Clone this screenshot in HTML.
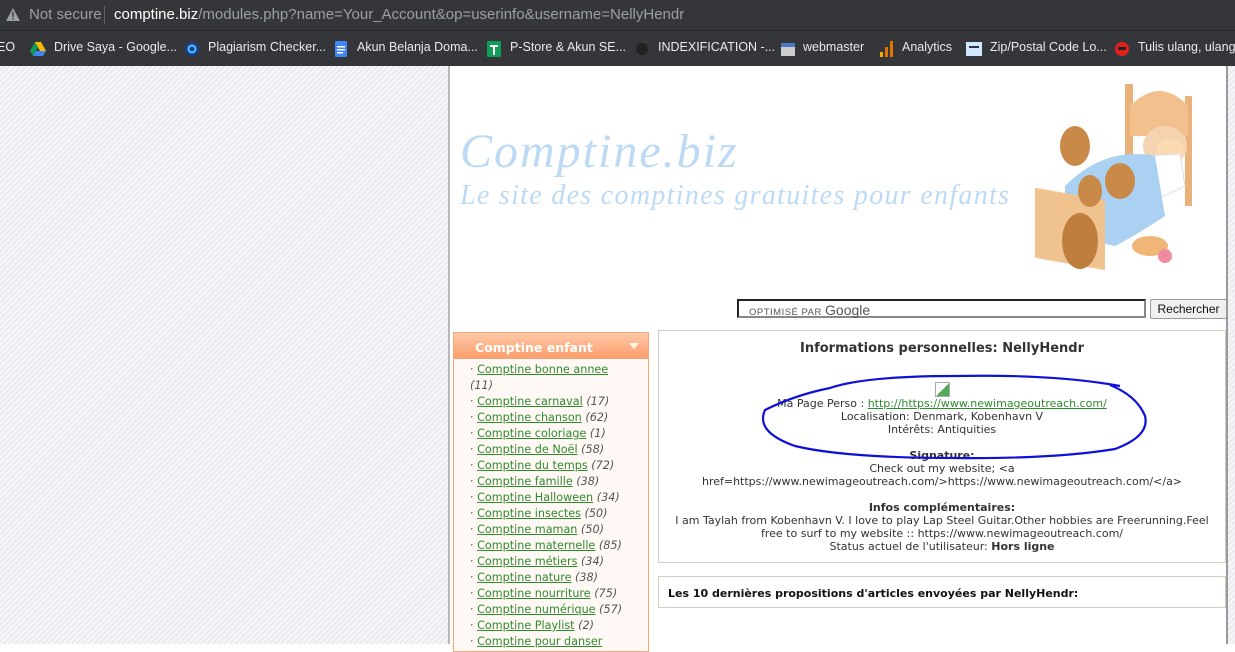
<!DOCTYPE html>
<html><head><meta charset="utf-8"><style>
*{margin:0;padding:0;box-sizing:border-box}
body{width:1235px;height:644px;overflow:hidden;font-family:"Liberation Sans",sans-serif;position:relative;background:#fff}
.addr{position:absolute;left:0;top:0;width:1235px;height:30px;background:#35363a;color:#9aa0a6;font-size:15px}
.bm{position:absolute;left:0;top:30px;width:1235px;height:36px;background:#35363a;color:#e8eaed;font-size:12.5px;border-top:1px solid #2a2a2c}
.bm span{position:absolute;top:9px;white-space:nowrap}
.ic{position:absolute;top:10px;width:16px;height:16px}
.stripes{position:absolute;top:66px;height:578px;background:repeating-linear-gradient(135deg,#f6f7f9 0 2px,#e9ebef 2px 4px)}
.page{position:absolute;left:448px;top:66px;width:780px;height:578px;background:#fff;border-left:2px solid #b8b8b8;border-right:2px solid #9a9a9a}
a{color:#2e8b2e}
.side{position:absolute;left:453px;top:332px;width:196px;height:320px;border:1px solid #f5a57a;background:#fff8f4}
.sh{height:26px;background:linear-gradient(#ffc9a8,#fb9f6c);color:#fff;font-weight:bold;font-size:12.5px;padding:7px 0 0 21px;border-bottom:1px solid #f5a57a;position:relative;font-family:"DejaVu Sans",sans-serif}
.side ul{list-style:none;font-family:"DejaVu Sans",sans-serif;font-size:11.2px;color:#555;padding:3px 0 0 16px;line-height:16px}
.side li i{color:#555}
.box{position:absolute;border:1px solid #cfcfbf;background:#fff;font-family:"DejaVu Sans",sans-serif;color:#333;font-size:11px;text-align:center}
</style></head><body>
<div class="addr">
<svg style="position:absolute;left:6px;top:8px" width="14" height="13"><path d="M7 0L14 13H0Z" fill="#9aa0a6"/><rect x="6.3" y="4" width="1.4" height="5" fill="#35363a"/><rect x="6.3" y="10" width="1.4" height="1.4" fill="#35363a"/></svg>
<span style="position:absolute;left:29px;top:6px">Not secure</span>
<span style="position:absolute;left:104px;top:6px;width:1px;height:18px;background:#5f6368"></span>
<span style="position:absolute;left:114px;top:6px;white-space:nowrap"><b style="color:#fff;font-weight:normal">comptine.biz</b>/modules.php?name=Your_Account&amp;op=userinfo&amp;username=NellyHendr</span>
</div>
<div class="bm">
<span style="left:-3px">EO</span>
<svg class="ic" style="left:30px" viewBox="0 0 16 16"><path d="M5 1h6l5 9h-6z" fill="#fbbc04"/><path d="M5 1L0 10l3 5 5-9z" fill="#0f9d58"/><path d="M3 15h10l3-5H6z" fill="#4285f4"/></svg><span style="left:54px">Drive Saya - Google...</span>
<svg class="ic" style="left:184px" viewBox="0 0 16 16"><circle cx="8" cy="8" r="7" fill="#1a3e8c"/><circle cx="8" cy="8" r="3.5" fill="none" stroke="#4cc3ff" stroke-width="2"/></svg><span style="left:208px">Plagiarism Checker...</span>
<svg class="ic" style="left:333px" viewBox="0 0 16 16"><rect x="2" y="0" width="12" height="16" rx="1" fill="#4285f4"/><rect x="4" y="5" width="8" height="1.5" fill="#fff"/><rect x="4" y="8" width="8" height="1.5" fill="#fff"/><rect x="4" y="11" width="6" height="1.5" fill="#fff"/></svg><span style="left:357px">Akun Belanja Doma...</span>
<svg class="ic" style="left:486px" viewBox="0 0 16 16"><rect x="1" y="0" width="14" height="16" rx="1" fill="#0f9d58"/><rect x="4" y="4" width="8" height="2" fill="#fff"/><rect x="7" y="4" width="2" height="10" fill="#fff"/></svg><span style="left:510px">P-Store &amp; Akun SE...</span>
<svg class="ic" style="left:634px" viewBox="0 0 16 16"><circle cx="8" cy="8" r="6" fill="#222"/></svg><span style="left:658px">INDEXIFICATION -...</span>
<svg class="ic" style="left:780px" viewBox="0 0 16 16"><rect x="1" y="4" width="14" height="11" fill="#ccc"/><rect x="1" y="2" width="14" height="4" fill="#4a78c2"/></svg><span style="left:803px">webmaster</span>
<svg class="ic" style="left:878px" viewBox="0 0 16 16"><rect x="2" y="11" width="3" height="5" fill="#f9ab00"/><rect x="7" y="6" width="3" height="10" fill="#e37400"/><rect x="12" y="0" width="3" height="16" fill="#e37400"/></svg><span style="left:902px">Analytics</span>
<svg class="ic" style="left:966px" viewBox="0 0 16 16"><rect x="0" y="1" width="16" height="14" fill="#cfe8ff"/><rect x="3" y="5" width="10" height="2" fill="#334"/></svg><span style="left:990px">Zip/Postal Code Lo...</span>
<svg class="ic" style="left:1114px" viewBox="0 0 16 16"><circle cx="8" cy="8" r="7" fill="#e0201b"/><rect x="4" y="6" width="8" height="3" fill="#222"/></svg><span style="left:1138px">Tulis ulang, ulangi,</span>
</div>
<div class="stripes" style="left:0;width:448px"></div>
<div class="stripes" style="left:1228px;width:7px"></div>
<div class="page"></div>
<div style="position:absolute;left:460px;top:124px;font-family:'Liberation Serif',serif;font-style:italic;color:#bcdaf5;font-size:48px;letter-spacing:2px">Comptine.biz</div>
<div style="position:absolute;left:460px;top:180px;font-family:'Liberation Serif',serif;font-style:italic;color:#bcdaf5;font-size:28px;letter-spacing:1.3px;white-space:nowrap">Le site des comptines gratuites pour enfants</div>
<svg style="position:absolute;left:1025px;top:76px" width="170" height="200" viewBox="0 0 170 200">
<rect x="100" y="8" width="8" height="120" fill="#e8b27a"/><rect x="160" y="20" width="7" height="110" fill="#e8b27a"/>
<path d="M105 30Q135 0 163 30V60H105Z" fill="#f2c08c"/>
<ellipse cx="140" cy="70" rx="22" ry="20" fill="#f6d3b0"/><ellipse cx="145" cy="75" rx="14" ry="12" fill="#fbd9b3"/>
<path d="M120 80L155 78L160 110L118 130Z" fill="#fff" stroke="#ddd"/>
<path d="M40 110Q80 70 130 80L140 140Q110 160 90 170L40 160Z" fill="#aad1f2"/>
<rect x="10" y="110" width="70" height="70" fill="#f0c28d" transform="skewY(10)"/>
<ellipse cx="50" cy="70" rx="15" ry="20" fill="#c98949"/><ellipse cx="95" cy="105" rx="15" ry="18" fill="#c98949"/><ellipse cx="65" cy="115" rx="12" ry="16" fill="#c98949"/>
<ellipse cx="55" cy="165" rx="18" ry="28" fill="#c07d40"/><ellipse cx="125" cy="170" rx="18" ry="10" fill="#f0b678"/><circle cx="140" cy="180" r="7" fill="#f08aa0"/>
</svg>
<div style="position:absolute;left:737px;top:299px;width:409px;height:19px;border:2px solid #222;border-right-color:#888;border-bottom-color:#888;font-size:9.5px;color:#555;padding:1px 0 0 10px;letter-spacing:.5px">OPTIMISÉ PAR <span style="font-size:14px;color:#555;letter-spacing:0">Google</span></div>
<div style="position:absolute;left:1150px;top:299px;width:77px;height:20px;border:1px solid #999;background:#f0f0f0;border-radius:2px;font-size:12px;text-align:center;padding-top:2px;color:#111">Rechercher</div>
<div class="side"><div class="sh"><span style="position:absolute;left:7px;top:10px;width:8px;height:8px;border-radius:50%;background:#f6b08a"></span>Comptine enfant<span style="position:absolute;right:9px;top:10px;border:5px solid transparent;border-top:6px solid #fff3ea"></span></div>
<ul>
<li>· <a href="#">Comptine bonne annee</a><br><i>(11)</i></li>
<li>· <a href="#">Comptine carnaval</a> <i>(17)</i></li>
<li>· <a href="#">Comptine chanson</a> <i>(62)</i></li>
<li>· <a href="#">Comptine coloriage</a> <i>(1)</i></li>
<li>· <a href="#">Comptine de Noël</a> <i>(58)</i></li>
<li>· <a href="#">Comptine du temps</a> <i>(72)</i></li>
<li>· <a href="#">Comptine famille</a> <i>(38)</i></li>
<li>· <a href="#">Comptine Halloween</a> <i>(34)</i></li>
<li>· <a href="#">Comptine insectes</a> <i>(50)</i></li>
<li>· <a href="#">Comptine maman</a> <i>(50)</i></li>
<li>· <a href="#">Comptine maternelle</a> <i>(85)</i></li>
<li>· <a href="#">Comptine métiers</a> <i>(34)</i></li>
<li>· <a href="#">Comptine nature</a> <i>(38)</i></li>
<li>· <a href="#">Comptine nourriture</a> <i>(75)</i></li>
<li>· <a href="#">Comptine numérique</a> <i>(57)</i></li>
<li>· <a href="#">Comptine Playlist</a> <i>(2)</i></li>
<li>· <a href="#">Comptine pour danser</a></li>
</ul></div>
<div class="box" style="left:658px;top:330px;width:568px;height:233px;line-height:13px">
<div style="font-size:13px;font-weight:bold;margin-top:11px;color:#333">Informations personnelles: NellyHendr</div>
<div style="margin:27px auto 0;width:15px;height:15px;border:1px solid #aaa;background:linear-gradient(135deg,#fff 50%,#5a5 50%)"></div>
<div>Ma Page Perso : <a href="#">http://https://www.newimageoutreach.com/</a></div>
<div>Localisation: Denmark, Kobenhavn V</div>
<div>Intérêts: Antiquities</div>
<div style="margin-top:13px;font-weight:bold">Signature:</div>
<div>Check out my website; &lt;a<br>href=https://www.newimageoutreach.com/&gt;https://www.newimageoutreach.com/&lt;/a&gt;</div>
<div style="margin-top:13px;font-weight:bold">Infos complémentaires:</div>
<div>I am Taylah from Kobenhavn V. I love to play Lap Steel Guitar.Other hobbies are Freerunning.Feel<br>free to surf to my website :: https://www.newimageoutreach.com/<br>Status actuel de l'utilisateur: <b>Hors ligne</b></div>
</div>
<div class="box" style="left:658px;top:576px;width:568px;height:32px;text-align:left;padding:10px 0 0 9px;font-weight:bold;color:#111">Les 10 dernières propositions d'articles envoyées par NellyHendr:</div>
<svg style="position:absolute;left:755px;top:370px" width="400" height="100"><path d="M365 16Q300 4 200 6Q110 6 75 18Q40 25 10 40Q0 62 40 76Q90 88 200 88Q300 89 360 79Q395 66 390 46Q382 26 355 15" fill="none" stroke="#1010d8" stroke-width="2.2"/></svg>
</body></html>
